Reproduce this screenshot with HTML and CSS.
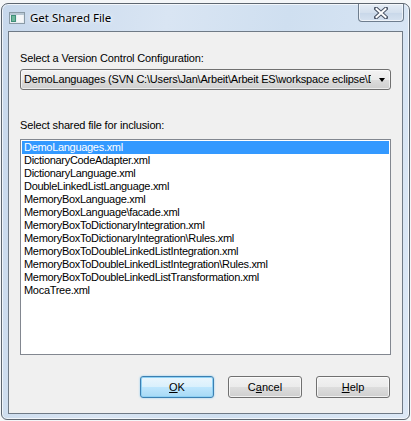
FILE: index.html
```html
<!DOCTYPE html>
<html>
<head>
<meta charset="utf-8">
<link rel="stylesheet" href="styles.css">
</head>
<body>
<div class="window">
  <div class="titlebar">
    <svg class="appicon" width="16" height="12" viewBox="0 0 16 12">
      <rect x="0.5" y="0.5" width="15" height="11" fill="#e8eef2" stroke="#8a9aa6"/>
      <rect x="1" y="1" width="14" height="2" fill="#b8c8d4"/>
      <rect x="2" y="3" width="5" height="7" fill="#3f8f78"/>
      <rect x="3" y="4" width="3" height="5" fill="#6fb79c"/>
      <rect x="8" y="3" width="6" height="7" fill="#f4f6f8"/>
    </svg>
    <span class="title">Get Shared File</span>
    <div class="close">
      <svg width="14" height="12" viewBox="0 0 14 12">
        <path d="M2 1.5 L12 10.5 M12 1.5 L2 10.5" stroke="#4a5466" stroke-width="4" stroke-linecap="square"/>
        <path d="M2.5 2 L11.5 10 M11.5 2 L2.5 10" stroke="#ffffff" stroke-width="2" stroke-linecap="square"/>
      </svg>
    </div>
  </div>
  <div class="client">
    <div class="label">Select a Version Control Configuration:</div>
    <div class="combo">
      <span class="combo-text">DemoLanguages (SVN C:\Users\Jan\Arbeit\Arbeit ES\workspace eclipse\DemoLanguages)</span>
      <span class="arrow"></span>
    </div>
    <div class="label label2">Select shared file for inclusion:</div>
    <ul class="list">
      <li class="selected">DemoLanguages.xml</li>
      <li>DictionaryCodeAdapter.xml</li>
      <li>DictionaryLanguage.xml</li>
      <li>DoubleLinkedListLanguage.xml</li>
      <li>MemoryBoxLanguage.xml</li>
      <li>MemoryBoxLanguage\facade.xml</li>
      <li>MemoryBoxToDictionaryIntegration.xml</li>
      <li>MemoryBoxToDictionaryIntegration\Rules.xml</li>
      <li>MemoryBoxToDoubleLinkedListIntegration.xml</li>
      <li>MemoryBoxToDoubleLinkedListIntegration\Rules.xml</li>
      <li>MemoryBoxToDoubleLinkedListTransformation.xml</li>
      <li>MocaTree.xml</li>
    </ul>
    <div class="buttons">
      <div class="btn btn-default"><u>O</u>K</div>
      <div class="btn">C<u>a</u>ncel</div>
      <div class="btn"><u>H</u>elp</div>
    </div>
  </div>
</div>
</body>
</html>
```

FILE: styles.css
```css
* { box-sizing: border-box; }
html, body { margin: 0; padding: 0; }
body {
  width: 411px;
  height: 421px;
  background: #f4f6f8;
  padding: 3px 1px 0 1px;
  overflow: hidden;
}
.window {
  width: 409px;
  height: 417px;
  border: 1px solid #5d6670;
  border-radius: 7px 7px 6px 6px;
  background: linear-gradient(100deg, #c7d8ec 0%, #d9e5f3 35%, #cfdff0 60%, #dce8f6 100%);
  box-shadow: inset 0 0 0 1px rgba(255,255,255,0.7);
  padding: 0 6px 5px 6px;
  display: flex;
  flex-direction: column;
}
.titlebar {
  height: 27px;
  display: flex;
  align-items: flex-start;
  padding-left: 1px;
  margin-right: -1px;
}
.appicon {
  margin-top: 8px;
  flex: none;
}
.title {
  font-family: "Noto Sans", "Liberation Sans", sans-serif;
  font-size: 11.5px;
  line-height: 15px;
  margin-top: 6px;
  margin-left: 5px;
  color: #000;
  text-shadow: 0 0 6px #fff, 0 0 3px #fff;
}
.close {
  margin-left: auto;
  width: 46px;
  height: 18px;
  border: 1px solid #6e7d8e;
  border-top: none;
  border-radius: 0 0 4px 4px;
  background: linear-gradient(#e4ecf5, #d4e0ee 50%, #c8d7e9 51%, #d6e2f0);
  box-shadow: inset 0 0 0 1px rgba(255,255,255,0.6);
  display: flex;
  align-items: center;
  justify-content: center;
}
.client {
  flex: 1;
  border: 1px solid #6f7a86;
  background: #f0f0f0;
  padding: 20px 11px 0 11px;
  font-family: "Liberation Sans", Arial, sans-serif;
  font-size: 11px;
  color: #000;
  display: flex;
  flex-direction: column;
}
.label {
  line-height: 13px;
  height: 13px;
  letter-spacing: -0.15px;
  white-space: nowrap;
}
.combo {
  margin-top: 4px;
  height: 21px;
  border: 1px solid #707070;
  border-radius: 3px;
  background: linear-gradient(#f2f2f2, #ebebeb 50%, #dddddd 51%, #cfcfcf);
  box-shadow: inset 0 0 0 1px rgba(255,255,255,0.6);
  display: flex;
  align-items: center;
  padding-left: 3px;
}
.combo-text {
  width: 347px;
  overflow: hidden;
  white-space: nowrap;
  letter-spacing: -0.2px;
  line-height: 13px;
}
.arrow {
  margin-left: 8px;
  width: 0;
  height: 0;
  border-left: 3.5px solid transparent;
  border-right: 3.5px solid transparent;
  border-top: 4px solid #000;
}
.label2 {
  margin-top: 29px;
}
.list {
  list-style: none;
  margin: 7px 0 0 0;
  padding: 1px;
  height: 216px;
  border: 1px solid #828790;
  background: #fff;
}
.list li {
  height: 13px;
  line-height: 13px;
  padding-left: 2px;
  white-space: nowrap;
  letter-spacing: -0.3px;
}
.list li.selected {
  background: #3399ff;
  color: #fff;
}
.buttons {
  margin-top: 21px;
  display: flex;
  justify-content: flex-end;
  gap: 14px;
  padding-right: 1px;
}
.btn {
  width: 74px;
  height: 22px;
  border: 1px solid #707070;
  border-radius: 3px;
  background: linear-gradient(#f2f2f2, #ebebeb 50%, #dddddd 51%, #cfcfcf);
  box-shadow: inset 0 0 0 1px rgba(255,255,255,0.7);
  display: flex;
  align-items: center;
  justify-content: center;
  line-height: 13px;
}
.btn u { text-underline-offset: 1px; }
.btn-default {
  border-color: #3c7fb1;
  background: linear-gradient(#eaf6fd, #d9f0fc 50%, #bee6fd 51%, #a7d9f5);
  box-shadow: inset 0 0 0 1px #8fd1f4, 0 0 2px #7fc6f0;
}
```
